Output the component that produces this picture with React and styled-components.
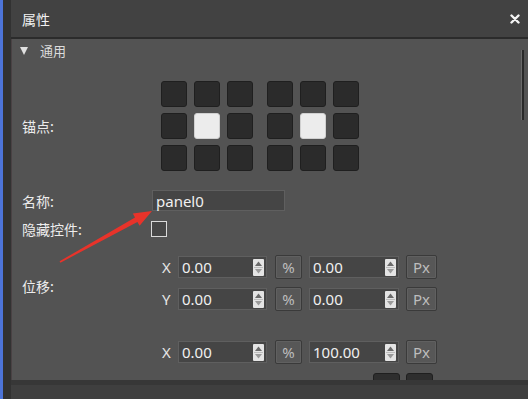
import React from 'react';
import styled, { createGlobalStyle } from 'styled-components';

const GlobalStyle = createGlobalStyle`
  html, body {
    margin: 0;
    padding: 0;
    background: #3d3d3d;
    overflow: hidden;
  }
  body {
    font-family: "Noto Sans", "Noto Sans CJK SC", sans-serif;
  }
`;

const Page = styled.div`
  position: relative;
  width: 528px;
  height: 399px;
`;

const Window = styled.div`
  display: flex;
  width: 528px;
  height: 399px;
  box-sizing: border-box;
  border-left: 3px solid #4d74d8;
  overflow: hidden;
`;

const Gutter = styled.div`
  width: 8px;
  flex-shrink: 0;
  background: #323232;
`;

const Dock = styled.div`
  flex: 1;
  min-width: 0;
  display: flex;
  flex-direction: column;
`;

const Header = styled.div`
  height: 37px;
  flex-shrink: 0;
  display: flex;
  align-items: center;
  justify-content: space-between;
  padding: 0 8px 0 11px;
  background: #424242;
  border-bottom: 2px solid #2b2b2b;
`;

const Title = styled.span`
  font-family: "Noto Sans CJK SC", sans-serif;
  font-size: 14px;
  color: #f2f2f2;
`;

const Close = styled.svg`
  width: 10px;
  height: 10px;
`;

const Body = styled.div`
  height: 341px;
  flex-shrink: 0;
  display: flex;
  background: #535353;
  border-left: 1px solid #4a4244;
  overflow: hidden;
`;

const Content = styled.div`
  flex: 1;
  min-width: 0;
  padding-left: 10px;
`;

const ScrollTrack = styled.div`
  width: 7px;
  flex-shrink: 0;
  padding-top: 11px;
`;

const Thumb = styled.div`
  width: 2px;
  height: 70px;
  background: #2a2a2a;
  border-left: 1px solid #6a6a6a;
`;

const SectionHead = styled.div`
  height: 23px;
  display: flex;
  align-items: center;
  margin-left: -2px;
  font-family: "Noto Sans CJK SC", sans-serif;
  font-size: 13px;
  color: #dcdcdc;
`;

const Caret = styled.span`
  width: 0;
  height: 0;
  border-left: 4px solid transparent;
  border-right: 4px solid transparent;
  border-top: 8px solid #e0e0e0;
  margin-right: 12px;
`;

const Row = styled.div`
  display: grid;
  grid-template-columns: 129px 1fr;
  align-items: center;
  margin-top: ${p => p.$top || 0}px;
`;

const Label = styled.span`
  font-family: "Noto Sans CJK SC", sans-serif;
  font-size: 14px;
  color: #ececec;
  padding-top: ${p => p.$pad || 0}px;
`;

const AnchorArea = styled.div`
  display: flex;
  gap: 14px;
  padding-left: 10px;
`;

const AnchorGroup = styled.div`
  display: grid;
  grid-template-columns: repeat(3, 26px);
  grid-auto-rows: 26px;
  column-gap: 7px;
  row-gap: 6px;
`;

const Cell = styled.div`
  box-sizing: border-box;
  border-radius: 3px;
  background: ${p => (p.$on ? '#ececec' : '#2b2b2b')};
  border: 1px solid ${p => (p.$on ? '#d0d0d0' : '#1f1f1f')};
`;

const TextField = styled.div`
  box-sizing: border-box;
  width: ${p => p.$w}px;
  height: ${p => p.$h || 22}px;
  margin-left: ${p => p.$ml || 0}px;
  display: flex;
  align-items: center;
  justify-content: space-between;
  padding: 0 2px 0 3px;
  background: #454545;
  border: 1px solid #5f5f5f;
  font-size: 15px;
  color: #f0f0f0;
`;

const CheckBox = styled.div`
  box-sizing: border-box;
  width: 16px;
  height: 16px;
  background: #474747;
  border: 1px solid #dadada;
`;

const Fields = styled.div`
  display: flex;
  flex-direction: column;
  gap: 8px;
`;

const AxisRow = styled.div`
  display: flex;
  align-items: center;
  padding-left: 11px;
`;

const Axis = styled.span`
  width: 16px;
  font-size: 15px;
  color: #e6e6e6;
`;

const UnitButton = styled.div`
  box-sizing: border-box;
  width: ${p => p.$w}px;
  height: 24px;
  margin: 0 ${p => p.$mr || 0}px 0 ${p => p.$ml || 0}px;
  display: flex;
  align-items: center;
  justify-content: center;
  background: #575757;
  border: 1px solid #3a3a3a;
  border-radius: 2px;
  box-shadow: inset 0 0 0 1px #606060;
  font-size: 15px;
  color: #bdbdbd;
`;

const SpinBox = styled.svg`
  width: 11px;
  height: 17px;
  flex-shrink: 0;
`;

const PresetRow = styled.div`
  display: flex;
  align-items: center;
  padding-left: 182px;
  gap: 6px;
  height: 28px;
`;

const PresetText = styled.span`
  font-family: "Noto Sans CJK SC", sans-serif;
  font-size: 14px;
  color: #ececec;
  margin-right: 2px;
`;

const MiniButton = styled.div`
  box-sizing: border-box;
  width: 27px;
  height: 27px;
  background: #2e2e2e;
  border: 1px solid #1f1f1f;
  border-radius: 3px;
`;

const Footer = styled.div`
  flex: 1;
  background: #3f3f3f;
  border-top: 5px solid #373737;
`;

const Arrow = styled.svg`
  position: absolute;
  left: 0;
  top: 0;
  width: 528px;
  height: 399px;
  pointer-events: none;
`;

const Spin = () => (
  <SpinBox viewBox="0 0 11 17">
    <rect x="0" y="0" width="11" height="17" rx="1" fill="#e4e4e4" />
    <polygon points="5.5,2.5 9,7 2,7" fill="#6a6a6a" />
    <line x1="1" y1="8.5" x2="10" y2="8.5" stroke="#bdbdbd" strokeWidth="1" />
    <polygon points="2,10 9,10 5.5,14.5" fill="#9a9a9a" />
  </SpinBox>
);

const Field = ({ value, w }) => (
  <TextField $w={w}>
    <span>{value}</span>
    <Spin />
  </TextField>
);

const XYRow = ({ axis, a, b }) => (
  <AxisRow>
    <Axis>{axis}</Axis>
    <Field value={a} w={89} />
    <UnitButton $w={27} $ml={8} $mr={7}>%</UnitButton>
    <Field value={b} w={90} />
    <UnitButton $w={31} $ml={7}>Px</UnitButton>
  </AxisRow>
);

const anchors = [
  [false, false, false, false, true, false, false, false, false],
  [false, false, false, false, true, false, false, false, false],
];

export default function App() {
  return (
    <Page>
      <GlobalStyle />
      <Window>
        <Gutter />
        <Dock>
          <Header>
            <Title>属性</Title>
            <Close viewBox="0 0 10 10">
              <path d="M1.5 1.5 L8.5 8.5 M8.5 1.5 L1.5 8.5" stroke="#f5f5f5" strokeWidth="2.4" strokeLinecap="round" />
            </Close>
          </Header>
          <Body>
            <Content>
              <SectionHead>
                <Caret />
                通用
              </SectionHead>

              <Row $top={19}>
                <Label>锚点:</Label>
                <AnchorArea>
                  {anchors.map((g, gi) => (
                    <AnchorGroup key={gi}>
                      {g.map((on, i) => <Cell key={i} $on={on} />)}
                    </AnchorGroup>
                  ))}
                </AnchorArea>
              </Row>

              <Row $top={19}>
                <Label>名称:</Label>
                <TextField $w={133} $h={21} $ml={1}>panel0</TextField>
              </Row>

              <Row $top={8}>
                <Label>隐藏控件:</Label>
                <CheckBox />
              </Row>

              <Row $top={16}>
                <Label $pad={5}>位移:</Label>
                <Fields>
                  <XYRow axis="X" a="0.00" b="0.00" />
                  <XYRow axis="Y" a="0.00" b="0.00" />
                </Fields>
              </Row>

              <Row $top={29}>
                <span />
                <XYRow axis="X" a="0.00" b="100.00" />
              </Row>

              <Row $top={8}>
                <Label>尺寸:</Label>
                <PresetRow>
                  <PresetText>预设:</PresetText>
                  <MiniButton />
                  <MiniButton />
                </PresetRow>
              </Row>
            </Content>
            <ScrollTrack>
              <Thumb />
            </ScrollTrack>
          </Body>
          <Footer />
        </Dock>
      </Window>
      <Arrow viewBox="0 0 528 399">
        <polygon
          points="59.6,261.3 135,217.5 132.8,213.6 152,211 139.6,225.8 137.4,221.9 60.4,262.7"
          fill="#e8332a"
        />
      </Arrow>
    </Page>
  );
}
